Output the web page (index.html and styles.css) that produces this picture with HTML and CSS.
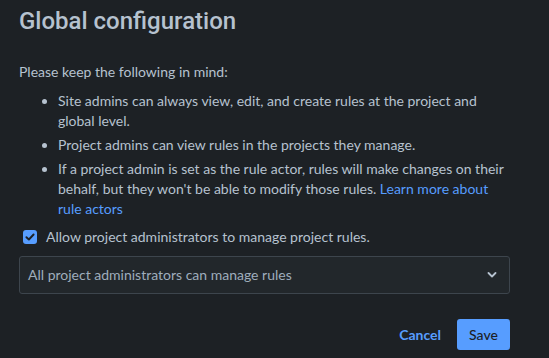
FILE: index.html
```html
<!DOCTYPE html>
<html>
<head>
<meta charset="utf-8">
<link rel="stylesheet" href="styles.css">
</head>
<body>
<div class="modal">
  <h1 class="title">Global configuration</h1>
  <p class="intro">Please keep the following in mind:</p>
  <ul class="notes">
    <li>Site admins can always view, edit, and create rules at the project and global level.</li>
    <li>Project admins can view rules in the projects they manage.</li>
    <li>If a project admin is set as the rule actor, rules will make changes on their behalf, but they won't be able to modify those rules. <a class="link" href="#">Learn more about rule actors</a></li>
  </ul>
  <label class="check">
    <span class="box"><svg width="10" height="8" viewBox="0 0 10 8"><path d="M1.4 4.2 L3.9 6.5 L8.6 1.5" fill="none" stroke="#1d2125" stroke-width="1.9" stroke-linecap="round" stroke-linejoin="round"/></svg></span>
    <span class="check-label">Allow project administrators to manage project rules.</span>
  </label>
  <div class="select">
    <span class="select-text">All project administrators can manage rules</span>
    <svg class="chev" width="10" height="6" viewBox="0 0 10 6"><path d="M1.5 1 L5 4.5 L8.5 1" fill="none" stroke="#b6c2cf" stroke-width="1.8" stroke-linecap="round" stroke-linejoin="round"/></svg>
  </div>
  <div class="actions">
    <button class="btn btn-subtle">Cancel</button>
    <button class="btn btn-primary">Save</button>
  </div>
</div>
</body>
</html>
```
FILE: styles.css
```css
html, body {
  margin: 0;
  padding: 0;
  background: #1d2125;
}
body {
  font-family: Lato, Roboto, sans-serif;
  color: #b6c2cf;
  font-size: 14px;
  line-height: 20px;
}
.modal {
  width: 491px;
  padding: 0 19px;
}
.title {
  margin: 0;
  padding-top: 6px;
  font-family: Roboto, sans-serif;
  font-size: 24px;
  line-height: 30px;
  font-weight: 500;
  color: #b6c2cf;
}
.intro {
  margin: 26px 0 0;
}
.notes {
  margin: 9px 0 0;
  padding-left: 39px;
}
.notes li {
  margin-bottom: 4px;
}
.notes li:last-child { margin-bottom: 0; }
.link {
  color: #579dff;
  text-decoration: none;
}
.check {
  display: flex;
  align-items: center;
  gap: 9px;
  margin-top: 8px;
  padding-left: 4px;
}
.box {
  width: 14px;
  height: 14px;
  border-radius: 3px;
  background: #579dff;
  display: flex;
  align-items: center;
  justify-content: center;
}
.select {
  margin-top: 9px;
  height: 36px;
  border: 1px solid #3d454d;
  border-radius: 3px;
  background: #22272b;
  display: flex;
  align-items: center;
  justify-content: space-between;
  padding: 0 12px 0 8px;
}
.select-text { color: #9fadbc; }
.actions {
  display: flex;
  justify-content: flex-end;
  gap: 4px;
  margin-top: 25px;
}
.btn {
  font-family: inherit;
  font-size: 14px;
  font-weight: 700;
  border: none;
  border-radius: 3px;
  height: 31px;
  padding: 0 12px;
  cursor: pointer;
}
.btn-subtle {
  background: transparent;
  color: #579dff;
}
.btn-primary {
  background: #579dff;
  color: #1d2125;
  width: 53px;
  font-weight: 500;
}
```
